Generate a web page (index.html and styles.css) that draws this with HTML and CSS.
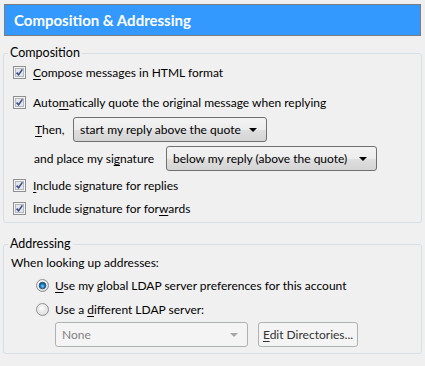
FILE: index.html
```html
<!DOCTYPE html>
<html>
<head>
<meta charset="utf-8">
<link rel="stylesheet" href="styles.css">
</head>
<body>
<div class="header"><span class="title">Composition &amp; Addressing</span></div>

<fieldset class="group group-comp">
  <legend class="legend">Composition</legend>
  <div class="row check-row first">
    <span class="cb"><svg width="13" height="13" viewBox="0 0 13 13"><rect x="0.5" y="0.5" width="12" height="12" fill="#f4f4f4" stroke="#8f8f8f"/><rect x="2.5" y="2.5" width="8" height="8" fill="#e4e6ea" stroke="#b3b8bf"/><path d="M3.6 6.6 L5.6 8.8 L9.4 3.4" fill="none" stroke="#3b4f8c" stroke-width="1.6"/></svg></span>
    <span class="lbl"><u>C</u>ompose messages in HTML format</span>
  </div>
  <div class="row check-row second">
    <span class="cb"><svg width="13" height="13" viewBox="0 0 13 13"><rect x="0.5" y="0.5" width="12" height="12" fill="#f4f4f4" stroke="#8f8f8f"/><rect x="2.5" y="2.5" width="8" height="8" fill="#e4e6ea" stroke="#b3b8bf"/><path d="M3.6 6.6 L5.6 8.8 L9.4 3.4" fill="none" stroke="#3b4f8c" stroke-width="1.6"/></svg></span>
    <span class="lbl">Auto<u>m</u>atically quote the original message when replying</span>
  </div>
  <div class="row select-row then-row">
    <span class="sel-label then-label"><u>T</u>hen,</span>
    <div class="select sel-reply"><span>start my reply above the quote</span><span class="arrow"></span></div>
  </div>
  <div class="row select-row sig-row">
    <span class="sel-label sig-label">and place my si<u>g</u>nature</span>
    <div class="select sel-sig"><span>below my reply (above the quote)</span><span class="arrow"></span></div>
  </div>
  <div class="row check-row third">
    <span class="cb"><svg width="13" height="13" viewBox="0 0 13 13"><rect x="0.5" y="0.5" width="12" height="12" fill="#f4f4f4" stroke="#8f8f8f"/><rect x="2.5" y="2.5" width="8" height="8" fill="#e4e6ea" stroke="#b3b8bf"/><path d="M3.6 6.6 L5.6 8.8 L9.4 3.4" fill="none" stroke="#3b4f8c" stroke-width="1.6"/></svg></span>
    <span class="lbl"><u>I</u>nclude signature for replies</span>
  </div>
  <div class="row check-row fourth">
    <span class="cb"><svg width="13" height="13" viewBox="0 0 13 13"><rect x="0.5" y="0.5" width="12" height="12" fill="#f4f4f4" stroke="#8f8f8f"/><rect x="2.5" y="2.5" width="8" height="8" fill="#e4e6ea" stroke="#b3b8bf"/><path d="M3.6 6.6 L5.6 8.8 L9.4 3.4" fill="none" stroke="#3b4f8c" stroke-width="1.6"/></svg></span>
    <span class="lbl">Include signature for for<u>w</u>ards</span>
  </div>
</fieldset>

<fieldset class="group group-addr">
  <legend class="legend">Addressing</legend>
  <div class="row plain-row">When looking up addresses:</div>
  <div class="row radio-row radio-first">
    <span class="rb"><svg width="13" height="13" viewBox="0 0 13 13"><defs><radialGradient id="rg1" cx="0.4" cy="0.35" r="0.7"><stop offset="0" stop-color="#ffffff"/><stop offset="1" stop-color="#d6d6d6"/></radialGradient><radialGradient id="dot" cx="0.5" cy="0.6" r="0.6"><stop offset="0" stop-color="#7fd0ff"/><stop offset="0.5" stop-color="#1f7fc7"/><stop offset="1" stop-color="#0c3f6e"/></radialGradient></defs><circle cx="6.5" cy="6.5" r="6" fill="url(#rg1)" stroke="#8f8f8f"/><circle cx="6.5" cy="6.5" r="3.3" fill="url(#dot)" stroke="#1c4a72" stroke-width="0.8"/></svg></span>
    <span class="lbl"><u>U</u>se my global LDAP server preferences for this account</span>
  </div>
  <div class="row radio-row radio-second">
    <span class="rb"><svg width="13" height="13" viewBox="0 0 13 13"><defs><radialGradient id="rg2" cx="0.4" cy="0.35" r="0.7"><stop offset="0" stop-color="#ffffff"/><stop offset="1" stop-color="#d6d6d6"/></radialGradient></defs><circle cx="6.5" cy="6.5" r="6" fill="url(#rg2)" stroke="#8f8f8f"/><circle cx="6.5" cy="6.5" r="4" fill="none" stroke="#e8e8e8"/></svg></span>
    <span class="lbl">Use a <u>d</u>ifferent LDAP server:</span>
  </div>
  <div class="row dir-row">
    <div class="select sel-none"><span>None</span><span class="arrow arrow-dis"></span></div>
    <div class="button"><span><u>E</u>dit Directories...</span></div>
  </div>
</fieldset>
</body>
</html>
```
FILE: styles.css
```css
html, body {
  margin: 0;
  padding: 0;
  background: #f0f0f0;
}
body {
  font-family: Lato, "Open Sans", sans-serif;
  font-size: 12px;
  color: #000;
  overflow: hidden;
  height: 366px;
  white-space: nowrap;
}
u {
  text-decoration: underline;
  text-underline-offset: 2px;
}
.header {
  margin: 4px 4px 0 4px;
  height: 30px;
  border: 1px solid #7d7d7d;
  background: #3399ff;
  display: flex;
  align-items: center;
}
.title {
  padding-left: 9px;
  color: #fff;
  font-weight: bold;
  font-size: 15px;
  line-height: 30px;
}
.group {
  margin: 9px 3px 0 3px;
  padding: 0 0 3px 0;
  border: 1px solid #d5dfe5;
  border-radius: 3px;
  min-width: 0;
}
.group-addr {
  margin-top: 13px;
  padding-bottom: 6px;
}
.legend {
  margin-left: 4px;
  padding: 0 2px;
  line-height: 16px;
  font-size: 12.5px;
}
.row {
  display: flex;
  align-items: center;
}
.check-row {
  height: 22px;
  padding-left: 9px;
}
.check-row.second { margin-top: 8px; }
.check-row.third { margin-top: 3px; }
.check-row.fourth { margin-top: 1px; }
.cb, .rb {
  width: 13px;
  height: 13px;
  display: block;
  flex: none;
}
.cb svg, .rb svg { display: block; }
.check-row .lbl { margin-left: 7px; }
.select-row {
  height: 25px;
  margin-top: 4px;
}
.sel-label {
  flex: none;
}
.then-label {
  margin-left: 31px;
  width: 38px;
}
.sig-label {
  margin-left: 30px;
  width: 132px;
}
.select {
  box-sizing: border-box;
  height: 25px;
  border: 1px solid #707070;
  border-radius: 3px;
  background: linear-gradient(#f3f3f3 0%, #ececec 50%, #dfdfdf 52%, #d4d4d4 100%);
  display: flex;
  align-items: center;
  justify-content: space-between;
  padding: 0 9px 0 6px;
}
.sel-reply { width: 194px; }
.sel-sig { width: 211px; }
.arrow {
  width: 0;
  height: 0;
  border-left: 4px solid transparent;
  border-right: 4px solid transparent;
  border-top: 4px solid #000;
}
.plain-row {
  height: 20px;
  padding-left: 7px;
}
.radio-row {
  height: 22px;
  padding-left: 32px;
  margin-top: 2px;
}
.radio-row .lbl { margin-left: 6px; }
.dir-row {
  margin-top: 2px;
  padding-left: 51px;
  height: 25px;
}
.sel-none {
  width: 193px;
  border-color: #adb2b5;
  background: #f4f4f4;
  color: #838383;
}
.arrow-dis {
  border-top-color: #a6a6a6;
}
.button {
  box-sizing: border-box;
  margin-left: 10px;
  width: 100px;
  height: 25px;
  border: 1px solid #adb2b5;
  border-radius: 3px;
  background: #f4f4f4;
  color: #333;
  display: flex;
  align-items: center;
  justify-content: center;
}
```
